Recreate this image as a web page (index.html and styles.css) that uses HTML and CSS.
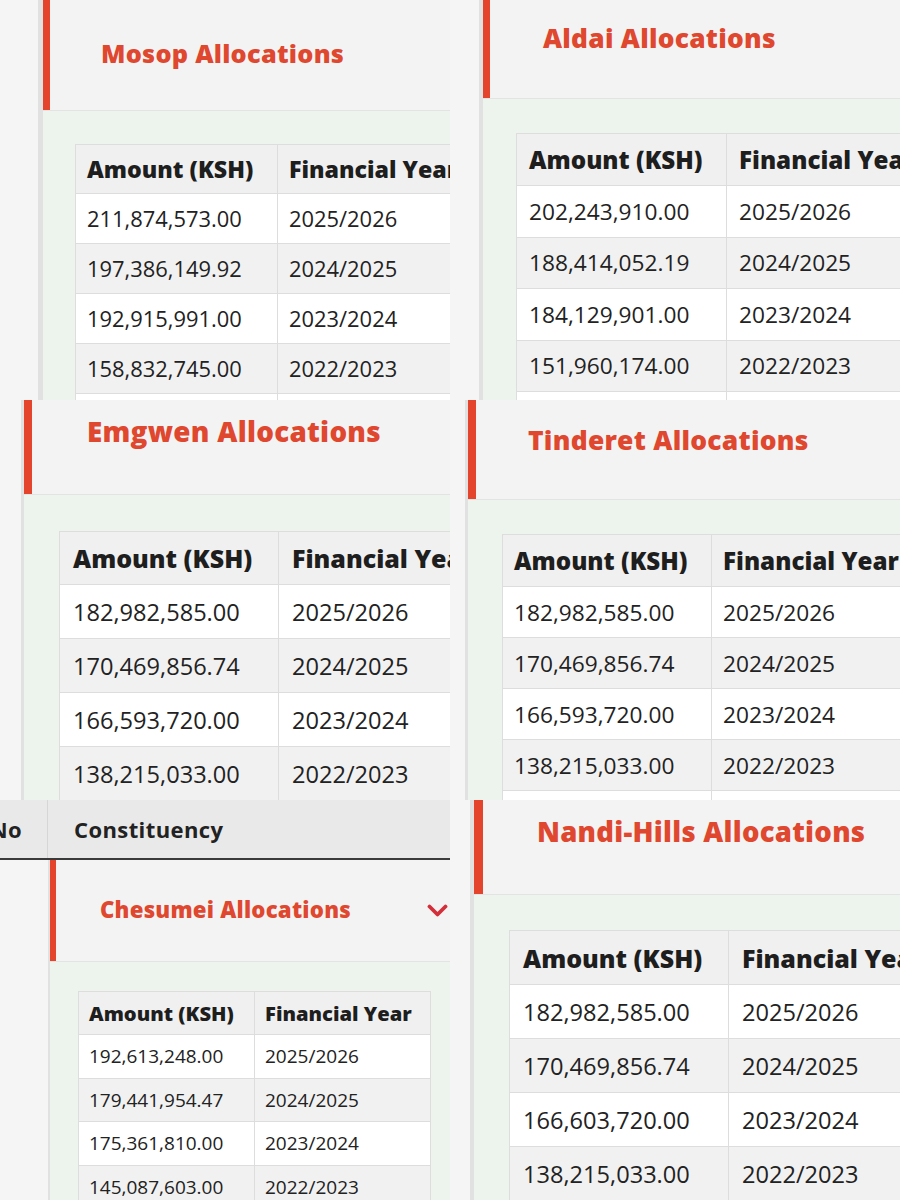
FILE: index.html
```html
<!DOCTYPE html>
<html lang="en">
<head>
<meta charset="utf-8">
<title>Constituency Allocations</title>
<link rel="stylesheet" href="styles.css">
</head>
<body>
<div class="collage">

  <section class="shot p1">
    <div class="acc">
      <div class="acc-head"><h3 class="acc-title">Mosop Allocations</h3></div>
      <div class="acc-body">
        <table class="alloc">
          <thead><tr><th>Amount (KSH)</th><th>Financial Year</th></tr></thead>
          <tbody>
            <tr><td>211,874,573.00</td><td>2025/2026</td></tr>
            <tr><td>197,386,149.92</td><td>2024/2025</td></tr>
            <tr><td>192,915,991.00</td><td>2023/2024</td></tr>
            <tr><td>158,832,745.00</td><td>2022/2023</td></tr>
            <tr><td>&nbsp;</td><td>&nbsp;</td></tr>
          </tbody>
        </table>
      </div>
    </div>
  </section>

  <section class="shot p2">
    <div class="acc">
      <div class="acc-head"><h3 class="acc-title">Aldai Allocations</h3></div>
      <div class="acc-body">
        <table class="alloc">
          <thead><tr><th>Amount (KSH)</th><th>Financial Year</th></tr></thead>
          <tbody>
            <tr><td>202,243,910.00</td><td>2025/2026</td></tr>
            <tr><td>188,414,052.19</td><td>2024/2025</td></tr>
            <tr><td>184,129,901.00</td><td>2023/2024</td></tr>
            <tr><td>151,960,174.00</td><td>2022/2023</td></tr>
            <tr><td>&nbsp;</td><td>&nbsp;</td></tr>
          </tbody>
        </table>
      </div>
    </div>
  </section>

  <section class="shot p3">
    <div class="acc">
      <div class="acc-head"><h3 class="acc-title">Emgwen Allocations</h3></div>
      <div class="acc-body">
        <table class="alloc">
          <thead><tr><th>Amount (KSH)</th><th>Financial Year</th></tr></thead>
          <tbody>
            <tr><td>182,982,585.00</td><td>2025/2026</td></tr>
            <tr><td>170,469,856.74</td><td>2024/2025</td></tr>
            <tr><td>166,593,720.00</td><td>2023/2024</td></tr>
            <tr><td>138,215,033.00</td><td>2022/2023</td></tr>
            <tr><td>&nbsp;</td><td>&nbsp;</td></tr>
          </tbody>
        </table>
      </div>
    </div>
  </section>

  <section class="shot p4">
    <div class="acc">
      <div class="acc-head"><h3 class="acc-title">Tinderet Allocations</h3></div>
      <div class="acc-body">
        <table class="alloc">
          <thead><tr><th>Amount (KSH)</th><th>Financial Year</th></tr></thead>
          <tbody>
            <tr><td>182,982,585.00</td><td>2025/2026</td></tr>
            <tr><td>170,469,856.74</td><td>2024/2025</td></tr>
            <tr><td>166,593,720.00</td><td>2023/2024</td></tr>
            <tr><td>138,215,033.00</td><td>2022/2023</td></tr>
            <tr><td>&nbsp;</td><td>&nbsp;</td></tr>
          </tbody>
        </table>
      </div>
    </div>
  </section>

  <section class="shot p5">
    <div class="list-head">
      <div class="col-no">No</div>
      <div class="col-const">Constituency</div>
    </div>
    <div class="acc">
      <div class="acc-head">
        <h3 class="acc-title">Chesumei Allocations</h3>
        <svg class="chev" width="21" height="14" viewBox="0 0 21 14" aria-hidden="true"><polyline points="2.5,2.5 10.5,10.5 18.5,2.5" fill="none" stroke="#d32f3b" stroke-width="3.8" stroke-linecap="round" stroke-linejoin="round"/></svg>
      </div>
      <div class="acc-body">
        <table class="alloc">
          <thead><tr><th>Amount (KSH)</th><th>Financial Year</th></tr></thead>
          <tbody>
            <tr><td>192,613,248.00</td><td>2025/2026</td></tr>
            <tr><td>179,441,954.47</td><td>2024/2025</td></tr>
            <tr><td>175,361,810.00</td><td>2023/2024</td></tr>
            <tr><td>145,087,603.00</td><td>2022/2023</td></tr>
          </tbody>
        </table>
      </div>
    </div>
  </section>

  <section class="shot p6">
    <div class="acc">
      <div class="acc-head"><h3 class="acc-title">Nandi-Hills Allocations</h3></div>
      <div class="acc-body">
        <table class="alloc">
          <thead><tr><th>Amount (KSH)</th><th>Financial Year</th></tr></thead>
          <tbody>
            <tr><td>182,982,585.00</td><td>2025/2026</td></tr>
            <tr><td>170,469,856.74</td><td>2024/2025</td></tr>
            <tr><td>166,603,720.00</td><td>2023/2024</td></tr>
            <tr><td>138,215,033.00</td><td>2022/2023</td></tr>
            <tr><td>&nbsp;</td><td>&nbsp;</td></tr>
          </tbody>
        </table>
      </div>
    </div>
  </section>

</div>
</body>
</html>
```

FILE: styles.css
```css
html, body {
  margin: 0;
  padding: 0;
  background: #ffffff;
}

body {
  font-family: "Open Sans", "Noto Sans", "Liberation Sans", sans-serif;
  color: #222222;
}

.collage {
  display: grid;
  grid-template-columns: 450px 450px;
  grid-template-rows: 400px 400px 400px;
  width: 900px;
  height: 1200px;
}

.shot {
  overflow: hidden;
  background: #f5f5f5;
  display: flex;
  flex-direction: column;
  --c2: 230px;
  --tpt: 0px;
}

/* per-screenshot scale */
.p1 { --gw:38px; --bw:5px; --rw:7px; --hh:110px; --tfs:25.3px; --tpt:41px; --tpl:51px; --bpl:32px; --bpt:33px; --c1:202px; --thh:49px; --rh:50px; --cpl:11px; --fs:21.9px; --hfs:23.2px; }
.p2 { --gw:29px; --bw:4px; --rw:7px; --hh:98px; --tfs:26.3px; --tpt:25px; --tpl:53px; --bpl:33px; --bpt:34px; --c1:210px; --thh:52px; --rh:51.5px; --cpl:12px; --fs:22.7px; --hfs:24.2px; }
.p3 { --gw:21px; --bw:3px; --rw:8px; --hh:94px; --tfs:27.8px; --tpt:18px; --tpl:55px; --bpl:35px; --bpt:36px; --c1:219px; --thh:53px; --rh:54px; --cpl:13px; --fs:23.6px; --hfs:25px; }
.p4 { --gw:15px; --bw:3px; --rw:8px; --hh:99px; --tfs:26.4px; --tpt:27px; --tpl:52px; --bpl:34px; --bpt:34px; --c1:209px; --thh:52px; --rh:51px; --cpl:11px; --fs:22.7px; --hfs:24.2px; }
.p5 { --gw:48px; --bw:2px; --rw:6px; --hh:101px; --tfs:22.2px; --tpl:44px; --bpl:28px; --bpt:29px; --c1:176px; --c2:177px; --thh:43px; --rh:43.5px; --cpl:10px; --fs:19px; --hfs:20.2px; }
.p6 { --gw:20px; --bw:4px; --rw:9px; --hh:94px; --tfs:27.5px; --tpt:18px; --tpl:54px; --bpl:35px; --bpt:35px; --c1:219px; --thh:54px; --rh:54px; --cpl:13px; --fs:23.6px; --hfs:25px; }

.acc {
  flex: 1;
  margin-left: var(--gw);
  border-left: var(--bw) solid #e1e1e1;
  display: flex;
  flex-direction: column;
  min-height: 0;
}

.acc-head {
  box-sizing: border-box;
  height: var(--hh);
  flex: none;
  display: flex;
  align-items: flex-start;
  justify-content: space-between;
  padding: var(--tpt) 0 0 var(--tpl);
  background: #f3f3f3;
  border-left: var(--rw) solid #e4442c;
}

.acc-title {
  margin: 0;
  font-size: var(--tfs);
  line-height: 1;
  font-weight: 800;
  letter-spacing: 0.01em;
  color: #e0472f;
  white-space: nowrap;
}

.acc-body {
  flex: 1;
  background: #edf4ee;
  border-top: 1px solid #e3e3e3;
  padding: var(--bpt) 0 0 var(--bpl);
}

.alloc {
  border-collapse: collapse;
  table-layout: fixed;
  width: calc(var(--c1) + var(--c2));
  background: #ffffff;
}

.alloc th,
.alloc td {
  box-sizing: border-box;
  border: 1px solid #dddddd;
  padding: 0 0 0 var(--cpl);
  text-align: left;
  white-space: nowrap;
  overflow: hidden;
}

.alloc th:first-child,
.alloc td:first-child {
  width: var(--c1);
}

.alloc th {
  height: var(--thh);
  font-size: var(--hfs);
  font-weight: 800;
  color: #1e1e1e;
  background: #f0f0f0;
}

.alloc td {
  height: var(--rh);
  font-size: var(--fs);
  font-weight: 400;
  color: #222222;
}

.alloc tbody tr:nth-child(even) td {
  background: #f1f1f1;
}

/* Chesumei screenshot */
.list-head {
  flex: none;
  display: flex;
  height: 58px;
  background: #e9e9e9;
  border-bottom: 2px solid #3a3a3a;
  font-size: 22px;
  font-weight: 700;
  letter-spacing: 0.4px;
  color: #222222;
}

.col-no {
  box-sizing: border-box;
  width: 48px;
  display: flex;
  align-items: center;
  justify-content: flex-end;
  padding-right: 25px;
  border-right: 1px solid #d6d6d6;
  white-space: nowrap;
}

.col-const {
  display: flex;
  align-items: center;
  padding-left: 26px;
}

.p5 .acc-head {
  align-items: center;
  padding-right: 2px;
}

.chev {
  flex: none;
  display: block;
}
```
